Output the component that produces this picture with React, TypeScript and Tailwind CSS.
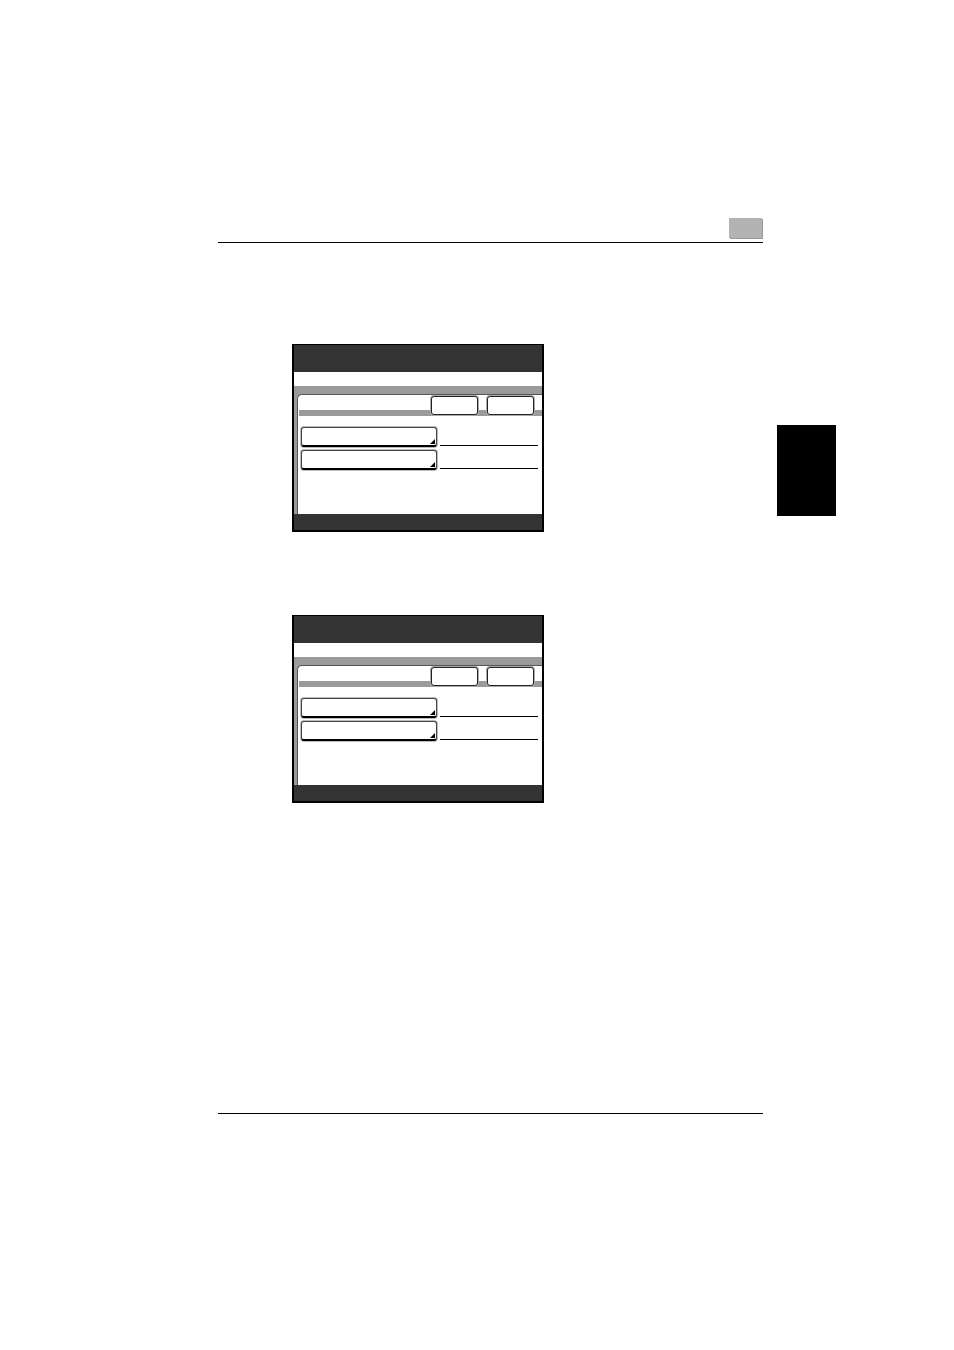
import React from "react";

function Field() {
  return (
    <div className="flex items-end">
      <div className="relative w-[136px] h-[20px] rounded-[3px] border border-[#444] border-b-2 border-b-black bg-white shadow-[0_0_0_1px_#bbb]">
        <div className="absolute right-[1px] bottom-[1px] w-0 h-0 border-l-[5px] border-l-transparent border-b-[5px] border-b-black" />
      </div>
      <div className="ml-[3px] mb-[1px] w-[98px] h-px bg-black" />
    </div>
  );
}

function Button() {
  return (
    <div className="w-[47px] h-[19px] rounded-[3px] border-[1.5px] border-[#222] bg-white shadow-[0_0_0_1px_#aaa]" />
  );
}

function Panel() {
  return (
    <div className="w-[252px] h-[188px] border-x-2 border-b-2 border-t border-black flex flex-col bg-white">
      <div className="h-[27px] bg-[#333333]" />
      <div className="h-[14px] bg-white" />
      <div className="flex-1 bg-[#9a9a9a] pt-[8px] pl-[3px] flex">
        <div className="flex-1 bg-white rounded-tl-[5px] border-l border-t border-[#555] flex flex-col">
          <div className="grid mt-[1px]">
            <div className="col-start-1 row-start-1 mt-[14px] ml-[1px] h-[6px] bg-[#9a9a9a]" />
            <div className="col-start-1 row-start-1 flex justify-end gap-[9px] pr-[8px]">
              <Button />
              <Button />
            </div>
          </div>
          <div className="mt-[11px] ml-[3px] flex flex-col gap-[3px]">
            <Field />
            <Field />
          </div>
        </div>
      </div>
      <div className="h-[16px] bg-[#333333]" />
    </div>
  );
}

export default function App() {
  return (
    <div className="w-[954px] h-[1350px] bg-white flex pl-[218px] pt-[218px]" style={{ fontFamily: '"Liberation Sans", Arial, sans-serif' }}>
      <div className="w-[545px] flex flex-col">
        <div className="flex justify-end h-[20px]">
          <div className="w-[33px] h-[20px] bg-[#b3b3b3] mr-[1px] shadow-[1px_1px_0_#999]" />
        </div>
        <div className="mt-[4px] h-px bg-black" />
        <div className="ml-[74px] mt-[101px]">
          <Panel />
        </div>
        <div className="ml-[74px] mt-[83px]">
          <Panel />
        </div>
        <div className="mt-[310px] h-px bg-black" />
      </div>
      <div className="ml-[14px] mt-[207px] w-[59px] h-[91px] bg-black" />
    </div>
  );
}
